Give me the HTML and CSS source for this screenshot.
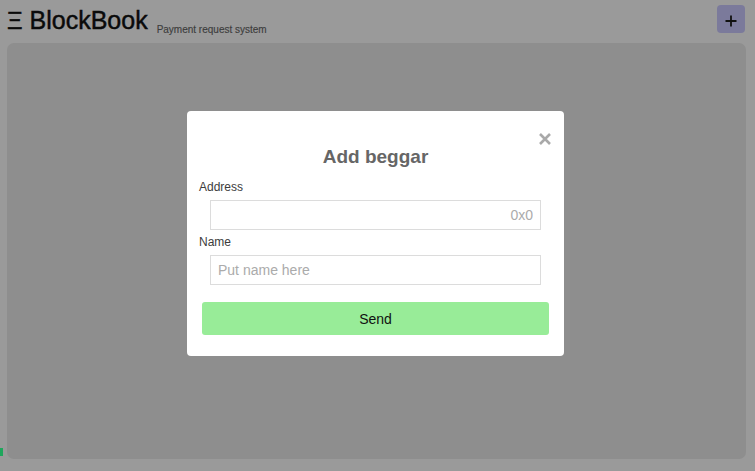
FILE: index.html
```html
<!DOCTYPE html>
<html>
<head>
<meta charset="utf-8">
<link rel="stylesheet" href="styles.css">
</head>
<body>
<div class="page">
  <header class="header">
    <h1 class="brand"><span class="logo">Ξ</span> BlockBook <span class="tagline">Payment request system</span></h1>
    <button class="add-btn" aria-label="Add">
      <svg width="12" height="12" viewBox="0 0 12 12"><path d="M6 0.5V11.5M0.5 6H11.5" stroke="#111" stroke-width="1.8"/></svg>
    </button>
  </header>
  <main class="panel"></main>
</div>
<div class="side-tab"></div>

<div class="overlay">
  <div class="modal">
    <button class="close" aria-label="Close">
      <svg width="12" height="12" viewBox="0 0 12 12"><path d="M1 1L11 11M11 1L1 11" stroke="#a9a9a9" stroke-width="2.6"/></svg>
    </button>
    <h2 class="modal-title">Add beggar</h2>
    <label class="field-label">Address</label>
    <input class="field-input right" type="text" placeholder="0x0">
    <label class="field-label second">Name</label>
    <input class="field-input" type="text" placeholder="Put name here">
    <button class="send">Send</button>
  </div>
</div>
</body>
</html>
```

FILE: styles.css
```css
* { box-sizing: border-box; }
html, body {
  margin: 0;
  padding: 0;
  height: 100%;
}
body {
  background: #9a9a9a;
  font-family: "Liberation Sans", Arial, sans-serif;
  overflow: hidden;
}
.page {
  height: 471px;
  display: flex;
  flex-direction: column;
  padding: 0 9px 12px 7px;
}
.header {
  height: 43px;
  display: flex;
  align-items: flex-start;
  justify-content: space-between;
}
.brand {
  margin: 6px 0 0 0;
  font-size: 25px;
  font-weight: normal;
  color: #0a0a0a;
  line-height: 28px;
  -webkit-text-stroke: 0.45px #0a0a0a;
}
.logo {
  font-size: 24px;
  margin-right: 0;
}
.tagline {
  font-size: 10px;
  color: #3d3d3d;
  vertical-align: -4px;
  margin-left: 2px;
  -webkit-text-stroke: 0.15px #3d3d3d;
}
.add-btn {
  margin-top: 5px;
  margin-right: 1px;
  width: 28px;
  height: 28px;
  border: none;
  border-radius: 4px;
  background: #7b7a9b;
  display: flex;
  align-items: center;
  justify-content: center;
  padding: 3px 0 0 0;
}
.add-btn svg { display: block; }
.panel {
  flex: 1;
  background: #8e8e8e;
  border-radius: 7px;
}
.side-tab {
  position: absolute;
  left: 0;
  top: 448px;
  width: 3px;
  height: 8px;
  background: #1fa65c;
}
.overlay {
  position: fixed;
  inset: 0;
  display: flex;
  align-items: flex-start;
  justify-content: flex-start;
  padding: 111px 0 0 187px;
}
.modal {
  position: relative;
  width: 377px;
  height: 245px;
  background: #fff;
  border-radius: 4px;
  padding: 34px 15px 20px 12px;
  display: flex;
  flex-direction: column;
}
.close {
  position: absolute;
  top: 22px;
  right: 13px;
  border: none;
  background: none;
  padding: 0;
  width: 12px;
  height: 12px;
}
.close svg { display: block; }
.modal-title {
  margin: 0 0 0 3px;
  text-align: center;
  font-size: 19px;
  line-height: 24px;
  font-weight: bold;
  color: #666;
}
.field-label {
  margin-top: 11px;
  font-size: 12px;
  line-height: 14px;
  color: #3c3c3c;
}
.field-label.second { margin-top: 5px; }
.field-input {
  margin: 6px 8px 0 11px;
  height: 30px;
  border: 1px solid #dcdcdc;
  font-family: "Liberation Sans", Arial, sans-serif;
  font-size: 14px;
  padding: 0 7px;
  outline: none;
  color: #333;
}
.field-input::placeholder { color: #ababab; }
.field-input.right { text-align: right; }
.send {
  margin: 17px 0 0 3px;
  height: 33px;
  border: none;
  border-radius: 3px;
  background: #98ec98;
  font-family: "Liberation Sans", Arial, sans-serif;
  font-size: 14px;
  color: #111;
  padding: 0;
}
```
